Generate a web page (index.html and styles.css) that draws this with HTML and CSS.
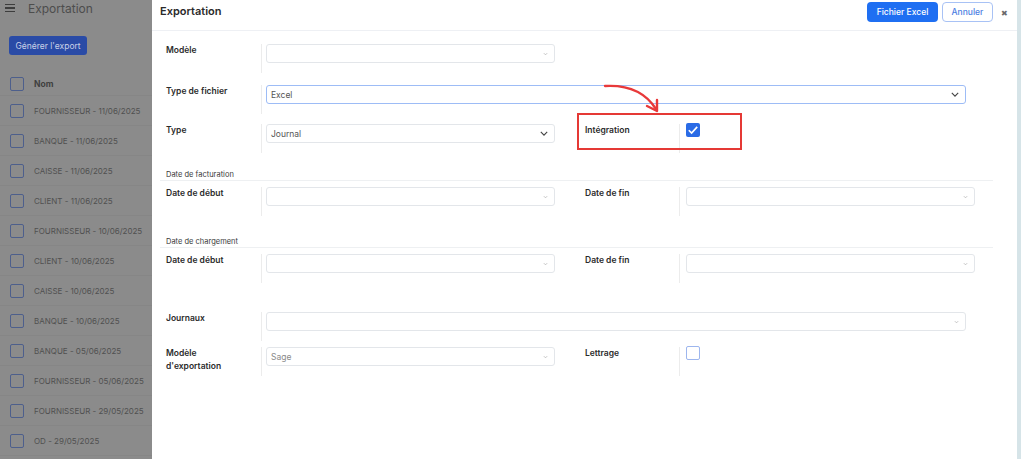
FILE: index.html
```html
<!DOCTYPE html>
<html lang="fr">
<head>
    <meta charset="UTF-8">
    <meta name="viewport" content="width=device-width, initial-scale=1.0">
    <title>Exportation</title>
    <link rel="stylesheet" href="styles.css">
</head>
<body>
<div class="page">
    <aside class="sidebar">
        <div class="side-top">
            <span class="burger"><i></i><i></i><i></i></span>
            <span class="side-title">Exportation</span>
        </div>
        <button class="btn-gen">Générer l'export</button>
        <ul class="export-list">
            <li class="list-head"><span class="cb"></span>Nom</li>
            <li><span class="cb"></span>FOURNISSEUR - 11/06/2025</li>
            <li><span class="cb"></span>BANQUE - 11/06/2025</li>
            <li><span class="cb"></span>CAISSE - 11/06/2025</li>
            <li><span class="cb"></span>CLIENT - 11/06/2025</li>
            <li><span class="cb"></span>FOURNISSEUR - 10/06/2025</li>
            <li><span class="cb"></span>CLIENT - 10/06/2025</li>
            <li><span class="cb"></span>CAISSE - 10/06/2025</li>
            <li><span class="cb"></span>BANQUE - 10/06/2025</li>
            <li><span class="cb"></span>BANQUE - 05/06/2025</li>
            <li><span class="cb"></span>FOURNISSEUR - 05/06/2025</li>
            <li><span class="cb"></span>FOURNISSEUR - 29/05/2025</li>
            <li><span class="cb"></span>OD - 29/05/2025</li>
        </ul>
    </aside>

    <main class="modal">
        <header class="modal-head">
            <h1>Exportation</h1>
            <div class="actions">
                <button class="btn-primary">Fichier Excel</button>
                <button class="btn-outline">Annuler</button>
                <span class="close">&#x2716;</span>
            </div>
        </header>

        <div class="modal-body">
            <div class="row r1">
                <div class="half">
                    <label class="lbl">Modèle</label>
                    <div class="field"><div class="input"><span></span><svg class="caret" viewBox="0 0 6 4"><path d="M1 1l2 2 2-2" /></svg></div></div>
                </div>
            </div>

            <div class="row r2">
                <div class="half wide">
                    <label class="lbl">Type de fichier</label>
                    <div class="field"><div class="input input-long focus"><span>Excel</span><svg class="chev" viewBox="0 0 10 6"><path d="M1 1l4 4 4-4" /></svg></div></div>
                </div>
            </div>

            <div class="row r3">
                <div class="half">
                    <label class="lbl">Type</label>
                    <div class="field"><div class="input"><span>Journal</span><svg class="chev" viewBox="0 0 10 6"><path d="M1 1l4 4 4-4" /></svg></div></div>
                </div>
                <div class="half right">
                    <label class="lbl">Intégration</label>
                    <div class="field"><span class="check on"><svg viewBox="0 0 10 10"><path d="M2 5.2l2 2 4-4.4" /></svg></span></div>
                </div>
            </div>

            <div class="section s1">Date de facturation</div>
            <div class="row r4">
                <div class="half">
                    <label class="lbl">Date de début</label>
                    <div class="field"><div class="input"><span></span><svg class="caret" viewBox="0 0 6 4"><path d="M1 1l2 2 2-2" /></svg></div></div>
                </div>
                <div class="half right">
                    <label class="lbl">Date de fin</label>
                    <div class="field"><div class="input"><span></span><svg class="caret" viewBox="0 0 6 4"><path d="M1 1l2 2 2-2" /></svg></div></div>
                </div>
            </div>

            <div class="section s2">Date de chargement</div>
            <div class="row r5">
                <div class="half">
                    <label class="lbl">Date de début</label>
                    <div class="field"><div class="input"><span></span><svg class="caret" viewBox="0 0 6 4"><path d="M1 1l2 2 2-2" /></svg></div></div>
                </div>
                <div class="half right">
                    <label class="lbl">Date de fin</label>
                    <div class="field"><div class="input"><span></span><svg class="caret" viewBox="0 0 6 4"><path d="M1 1l2 2 2-2" /></svg></div></div>
                </div>
            </div>

            <div class="row r6">
                <div class="half wide">
                    <label class="lbl">Journaux</label>
                    <div class="field"><div class="input input-long"><span></span><svg class="caret" viewBox="0 0 6 4"><path d="M1 1l2 2 2-2" /></svg></div></div>
                </div>
            </div>

            <div class="row r7">
                <div class="half">
                    <label class="lbl">Modèle<br>d'exportation</label>
                    <div class="field"><div class="input"><span class="muted">Sage</span><svg class="caret" viewBox="0 0 6 4"><path d="M1 1l2 2 2-2" /></svg></div></div>
                </div>
                <div class="half right">
                    <label class="lbl">Lettrage</label>
                    <div class="field"><span class="check"></span></div>
                </div>
            </div>
        </div>
    </main>
    <div class="edge"></div>

    <!-- annotation -->
    <svg class="arrow" viewBox="0 0 70 40">
        <path d="M5 7 Q40 5 56 30" />
        <path d="M47 27 L57 32 L57 21" />
    </svg>
    <div class="highlight"></div>
</div>
</body>
</html>
```

FILE: styles.css
```css
* {
    box-sizing: border-box;
}
body {
    margin: 0;
    font-family: "Inter", "Noto Sans", sans-serif;
    color: #222;
    background: #fff;
}
.page {
    position: relative;
    display: flex;
    width: 1024px;
    height: 459px;
    overflow: hidden;
}

/* sidebar (dimmed behind the modal) */
.sidebar {
    width: 152px;
    flex-shrink: 0;
    overflow: hidden;
    background: #8b8b8b;
    color: #4a4a4a;
}
.side-top {
    display: flex;
    align-items: center;
    height: 16px;
    padding-left: 5px;
}
.burger {
    display: flex;
    flex-direction: column;
    gap: 2px;
    width: 10px;
}
.burger i {
    display: block;
    height: 1.5px;
    background: #3d3d3d;
}
.side-title {
    margin-left: 13px;
    font-size: 12px;
    color: #4d4d4d;
}
.btn-gen {
    display: block;
    margin: 20px 0 0 9px;
    width: 78px;
    height: 19px;
    padding: 0;
    border: none;
    border-radius: 3px;
    background: #2a4ba6;
    color: #c9d1e6;
    font-family: inherit;
    font-size: 8.5px;
}
.export-list {
    list-style: none;
    margin: 17px 0 0;
    padding: 0;
}
.export-list li {
    display: flex;
    align-items: center;
    height: 30px;
    padding-left: 10px;
    white-space: nowrap;
    font-size: 8px;
    color: #505050;
    border-bottom: 1px solid #868686;
}
.export-list li.list-head {
    height: 24px;
    font-size: 8.5px;
    font-weight: 700;
    color: #3f3f3f;
}
.cb {
    width: 14px;
    height: 14px;
    flex-shrink: 0;
    margin-right: 10px;
    border: 1.5px solid #4d5f8c;
    border-radius: 2px;
}

/* modal */
.modal {
    width: 865px;
    flex-shrink: 0;
    background: #fff;
}
.modal-head {
    display: flex;
    justify-content: space-between;
    height: 31px;
    padding-left: 8px;
    border-bottom: 1px solid #eef0f4;
}
.modal-head h1 {
    margin: 4px 0 0;
    font-size: 11px;
    font-weight: 600;
    color: #2a2a2a;
}
.actions {
    display: flex;
    align-items: flex-start;
    padding-top: 2px;
}
.btn-primary, .btn-outline {
    height: 20px;
    padding: 0;
    border-radius: 4px;
    font-family: inherit;
    font-size: 8.5px;
    font-weight: 500;
}
.btn-primary {
    width: 71px;
    border: none;
    background: #1f6ff2;
    color: #fff;
}
.btn-outline {
    width: 51px;
    margin-left: 4px;
    border: 1px solid #a8c2f5;
    background: #fff;
    color: #4b7ee2;
}
.close {
    margin: 6px 0 0 8px;
    width: 16px;
    font-size: 8px;
    color: #6a6a6a;
}

.modal-body {
    padding: 0 24px 0 8px;
}
.row {
    display: flex;
    height: 29px;
}
.r1 { margin-top: 13px; }
.r2 { margin-top: 12px; }
.r3 { margin-top: 10px; }
.r4 { margin-top: 6px; }
.r5 { margin-top: 6px; }
.r6 { margin-top: 29px; }
.r7 { margin-top: 6px; }
.half {
    display: flex;
    flex-shrink: 0;
    width: 420px;
}
.half.right {
    width: 410px;
}
.half.wide {
    width: 810px;
}
.lbl {
    width: 102px;
    flex-shrink: 0;
    padding-left: 6px;
    border-right: 1px solid #ececec;
    font-size: 8.5px;
    font-weight: 600;
    line-height: 13px;
    color: #2b2b2b;
}
.half.right .lbl {
    width: 100px;
    padding-left: 5px;
}
.field {
    padding-left: 4px;
}
.half.right .field {
    padding-left: 6px;
}
.input {
    display: flex;
    align-items: center;
    justify-content: space-between;
    width: 289px;
    height: 19px;
    padding: 0 6px 0 4px;
    border: 1px solid #e3e6ea;
    border-radius: 3px;
    font-size: 8.5px;
    color: #555;
}
.input-long {
    width: 700px;
}
.input.focus {
    border-color: #9dbcf6;
}
.muted {
    color: #8a8a8a;
}
.caret {
    width: 5px;
    height: 4px;
    fill: none;
    stroke: #b8b8b8;
    stroke-width: 1;
}
.chev {
    width: 8px;
    height: 5px;
    fill: none;
    stroke: #444;
    stroke-width: 1.4;
}
.check {
    display: block;
    width: 14px;
    height: 14px;
    margin-top: -1px;
    border: 1.5px solid #9db6ee;
    border-radius: 2px;
}
.check.on {
    border: none;
    background: #2a6be6;
}
.check svg {
    display: block;
    width: 14px;
    height: 14px;
    fill: none;
    stroke: #fff;
    stroke-width: 1.2;
}

.section {
    height: 11px;
    margin-top: 17px;
    padding-left: 6px;
    border-bottom: 1px solid #eef0f2;
    font-size: 7.5px;
    line-height: 10px;
    color: #3a3a3a;
}
.s2 { margin-top: 21px; }

.edge {
    width: 4px;
    background: #d6e4e8;
}

/* red annotation */
.arrow {
    position: absolute;
    left: 600px;
    top: 79px;
    width: 70px;
    height: 40px;
    fill: none;
    stroke: #e8393a;
    stroke-width: 2.4;
    stroke-linecap: round;
    stroke-linejoin: round;
}
.highlight {
    position: absolute;
    left: 577px;
    top: 113px;
    width: 165px;
    height: 37px;
    border: 2px solid #e53935;
}
```
